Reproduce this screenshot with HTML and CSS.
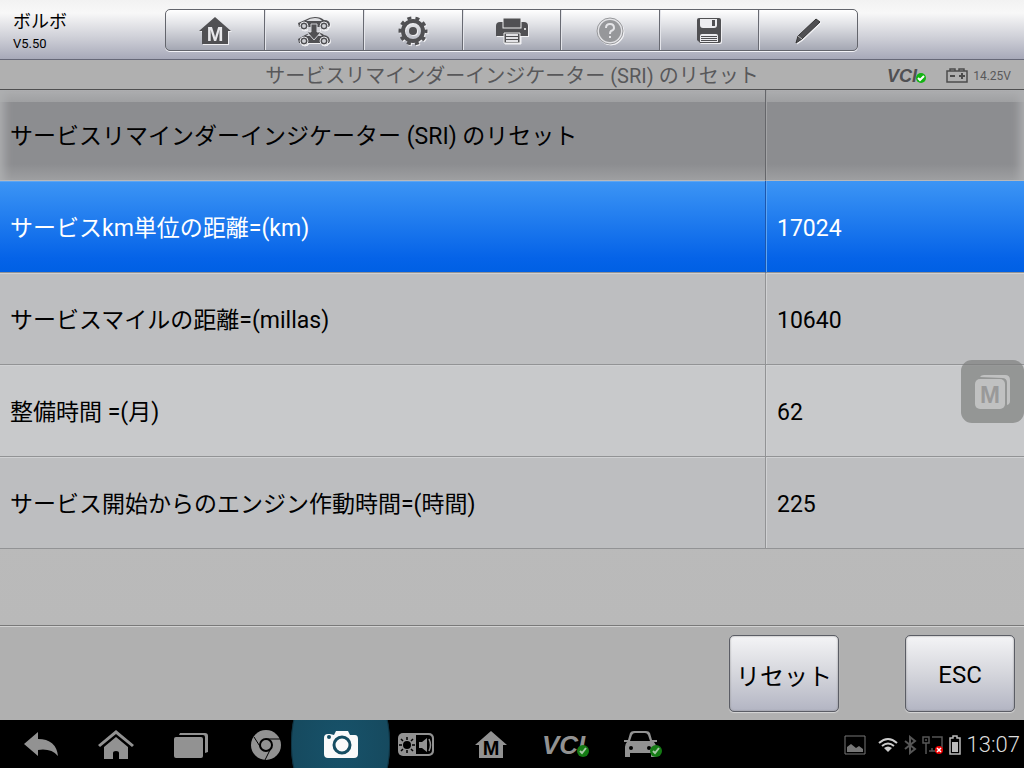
FILE: index.html
```html
<!DOCTYPE html>
<html lang="ja">
<head>
	<meta charset="utf-8">
	<title>ボルボ</title>
	<link rel="stylesheet" href="styles.css">
</head>
<body>
	<header class="topbar">
		<div class="vehicle">
			<div class="make">ボルボ</div>
			<div class="version">V5.50</div>
		</div>
		<div class="toolbar">
			<button type="button" aria-label="Home">
				<svg class="icon" width="34" height="30" viewBox="0 0 34 30"><path fill="#505053" d="M17 1 L33 15 H30 V28 H4 V15 H1 Z"/><text class="m-light" x="17" y="25" text-anchor="middle">M</text></svg>
			</button>
			<button type="button" aria-label="Vehicle swap">
				<svg class="icon" width="34" height="30" viewBox="0 0 34 30" fill="#505053">
					<path d="M1 7 L8 4 Q13 1 18 1 Q24 1 27 4 Q33 4 33 9 L32 11 H2 Z"/>
					<path fill="#dddee1" d="M9 5 Q13 2 18 2 Q23 2 25 5 Z"/>
					<path d="M1 23 L8 19 Q13 16 18 16 Q24 16 27 19 Q33 20 33 25 L32 27 H2 Z"/>
					<path fill="#d4d5d9" d="M9 20 Q12 17 14 17 V20 Z M21 17 Q24 18 25 20 H21 Z"/>
					<g stroke="#e4e4e7" stroke-width="1"><circle cx="7" cy="10" r="4"/><circle cx="27" cy="10" r="4"/><circle cx="7" cy="25" r="4"/><circle cx="27" cy="25" r="4"/></g>
					<g fill="#d0d1d6"><circle cx="7" cy="10" r="2"/><circle cx="27" cy="10" r="2"/><circle cx="7" cy="25" r="2"/><circle cx="27" cy="25" r="2"/><path d="M11 11 H23 V15 H11 Z"/></g>
					<path stroke="#d0d1d6" d="M14 8 H20 V16 H24 L17 24 L10 16 H14 Z"/>
				</svg>
			</button>
			<button type="button" aria-label="Settings">
				<svg class="icon" width="30" height="30" viewBox="0 0 30 30"><g fill="none" stroke="#505053"><circle cx="15" cy="15" r="13" stroke-width="3" stroke-dasharray="4 4.168" stroke-dashoffset="2"/><circle cx="15" cy="15" r="10" stroke-width="4"/></g><circle cx="15" cy="15" r="4" fill="#505053"/></svg>
			</button>
			<button type="button" aria-label="Print">
				<svg class="icon" width="34" height="28" viewBox="0 0 34 28"><path fill="#505053" d="M1 19 V9 Q1 5 5 5 H29 Q33 5 33 9 V19 Z"/><rect x="8" y="1" width="18" height="10" fill="#505053" stroke="#eeeeef"/><circle cx="30" cy="12" r="1" fill="#fff"/><path fill="#505053" stroke="#eeeeef" d="M9 16 H25 V26 H9 Z"/><path stroke="#e2e2e5" stroke-width="2" d="M11 18 H23 M11 21 H23 M11 24 H23"/></svg>
			</button>
			<button type="button" aria-label="Help" disabled>
				<svg class="icon" width="30" height="30" viewBox="0 0 30 30"><circle cx="15" cy="15" r="13" fill="#e3e3e6" stroke="#96979a"/><circle cx="15" cy="15" r="11" fill="#96979a"/><path d="M11 12 Q11 8 15 8 Q19 8 19 12 Q19 14 16 15 Q15 16 15 18 M15 20 V22" fill="none" stroke="#e5e5e8" stroke-width="2"/></svg>
			</button>
			<button type="button" aria-label="Save">
				<svg class="icon" width="26" height="28" viewBox="0 0 26 28"><path fill="#505053" d="M3 1 H23 Q25 1 25 3 V24 Q25 26 23 26 H4 L1 23 V3 Q1 1 3 1 Z"/><path fill="#ececef" d="M4 2 H21 V8 Q21 11 18 11 H7 Q4 11 4 8 Z M6 17 H20 Q22 17 22 19 V25 H4 V19 Q4 17 6 17 Z"/><path fill="#505053" d="M16 3 H19 V9 H16 Z"/><path stroke="#505053" stroke-width="1" d="M5 19.500 H21 M5 21.500 H21 M5 23.500 H21"/></svg>
			</button>
			<button type="button" aria-label="Edit">
				<svg class="icon" width="28" height="28" viewBox="0 0 28 28"><path fill="#505053" stroke="#333" d="M2 26 L4 19 L22 2 L26 5 L8 22 Z"/><path stroke="#bbb" fill="none" d="M4 19 L8 22"/></svg>
			</button>
		</div>
	</header>

	<div class="titlebar">
		<h1>サービスリマインダーインジケーター (SRI) のリセット</h1>
		<div class="power">
			<svg width="40" height="24" viewBox="0 0 40 24"><text class="vci" x="0" y="18" font-size="18" fill="#505053">VCI</text><circle cx="34" cy="14" r="5" fill="#12b312"/><path d="M31 14 L33 16 L37 12" fill="none" stroke="#fff" stroke-width="2"/></svg>
			<svg class="battery" width="22" height="16" viewBox="0 0 22 16" fill="none" stroke="#4c4c4c"><path stroke-width="1.500" d="M1 3 H21 V14 H1 Z M4 3 V1 H9 V3 M13 3 V1 H18 V3"/><path stroke-width="2" d="M4 8 H9 M13 8 H19 M16 5 V11"/></svg>
			<span>14.25V</span>
		</div>
	</div>

	<main>
		<table class="list">
			<thead>
				<tr><th scope="col">サービスリマインダーインジケーター (SRI) のリセット</th><th class="value" scope="col"></th></tr>
			</thead>
			<tbody>
				<tr class="selected"><td>サービスkm単位の距離=(km)</td><td class="value">17024</td></tr>
				<tr><td>サービスマイルの距離=(millas)</td><td class="value">10640</td></tr>
				<tr class="light"><td>整備時間 =(月)</td><td class="value">62</td></tr>
				<tr><td>サービス開始からのエンジン作動時間=(時間)</td><td class="value">225</td></tr>
			</tbody>
		</table>
	</main>

	<div class="actions">
		<button type="button">リセット</button>
		<button type="button">ESC</button>
	</div>

	<nav class="navbar">
		<button type="button" aria-label="Back"><svg width="36" height="28" viewBox="0 0 36 28" fill="#929292"><path d="M1 13 L15 1 V8 Q33 8 35 25 Q28 17 15 19 V25 Z"/></svg></button>
		<button type="button" aria-label="Home"><svg width="38" height="32" viewBox="0 0 38 32" fill="#929292"><path d="M1 16 L19 1 L37 16 L35 18 L19 5 L3 18 Z"/><path d="M7 18 L19 8 L31 18 V30 H22 V24 Q22 22 19 22 Q16 22 16 24 V30 H7 Z"/></svg></button>
		<button type="button" aria-label="Recent"><svg width="36" height="28" viewBox="0 0 36 28" fill="#929292"><rect x="1" y="6" width="29" height="21" rx="2"/><path d="M7 2 H32 Q35 2 35 5 V21 L32 22 V6 Q32 4 30 4 H6 Z"/></svg></button>
		<button type="button" aria-label="Browser"><svg width="32" height="32" viewBox="0 0 32 32"><circle cx="16" cy="16" r="15" fill="#929292"/><circle cx="16" cy="16" r="6" fill="#929292" stroke="#000" stroke-width="2"/><path d="M16 10 H30 M11 19 L4 8 M21 19 L15 31" stroke="#000" stroke-width="1"/></svg></button>
		<button type="button" class="camera" aria-label="Camera"><svg width="36" height="30" viewBox="0 0 36 30"><path fill="#fafafa" d="M11 5 L13 1 H25 L27 5 H32 Q35 5 35 9 V24 Q35 28 31 28 H5 Q1 28 1 24 V8 Q1 4 5 4 H7 Z"/><circle cx="19" cy="15" r="8" fill="none" stroke="#164d62" stroke-width="3"/><circle cx="6" cy="7" r="2" fill="#164d62"/></svg></button>
		<button type="button" aria-label="Brightness and sound"><svg width="38" height="26" viewBox="0 0 38 26"><rect x="1" y="1" width="36" height="23" rx="5" fill="#929292"/><path d="M19 3 H31 Q35 3 35 7 V18 Q35 22 31 22 H19 Z"/><circle cx="10" cy="13" r="4"/><path d="M10 5 V8 M10 18 V21 M2 13 H5 M15 13 H18 M4 7 L6 9 M14 17 L16 19 M4 19 L6 17 M14 9 L16 7" stroke="#000" stroke-width="1.500"/><path fill="#929292" d="M22 10 H25 L30 6 V20 L25 16 H22 Z"/><path d="M32 7 Q35 13 32 19" fill="none" stroke="#929292" stroke-width="1.500"/></svg></button>
		<button type="button" aria-label="MaxiSys"><svg width="34" height="30" viewBox="0 0 34 30"><path fill="#929292" d="M17 1 L33 15 H29 V28 H5 V15 H1 Z"/><text class="m-dark" x="17" y="25" text-anchor="middle">M</text></svg></button>
		<button type="button" aria-label="VCI"><svg width="50" height="36" viewBox="0 0 50 36"><text class="vci" x="1" y="27" font-size="26" fill="#929292">VCI</text><circle cx="42" cy="24" r="6" fill="#147b14"/><path d="M39 24 L41 26 L45 21" fill="none" stroke="#a8c9a8" stroke-width="2"/></svg></button>
		<button type="button" aria-label="Vehicle"><svg width="42" height="30" viewBox="0 0 42 30"><path fill="#929292" fill-rule="evenodd" d="M4 10 H8 L10 3 Q11 1 14 1 H26 Q29 1 30 3 L32 10 H37 V12 H34 Q36 14 36 18 V27 H31 V23 H10 V27 H5 V17 Q5 14 7 12 H4 Z M10 11 H30 L28 5 Q27 3 25 3 H15 Q13 3 12 5 Z"/><circle cx="11" cy="18" r="2"/><circle cx="29" cy="18" r="2"/><circle cx="36" cy="21" r="6" fill="#147b14"/><path d="M33 21 L35 23 L39 18" fill="none" stroke="#a8c9a8" stroke-width="2"/></svg></button>
		<div class="status">
			<svg class="picture" width="22" height="20" viewBox="0 0 22 20"><path d="M1 1 H21 V19 H1 Z" fill="none" stroke="#777"/><path fill="#777" d="M3 17 V12 L7 9 L12 13 L15 11 L19 14 V17 Z"/></svg>
			<svg width="20" height="16" viewBox="0 0 20 16" fill="none" stroke="#ccc" stroke-width="2"><path d="M1 6 Q10 -2 19 6 M4 9 Q10 4 16 9"/><path fill="#ccc" stroke="none" d="M6 11 Q10 8 14 11 L10 15 Z"/></svg>
			<svg width="14" height="20" viewBox="0 0 14 20"><path d="M2 6 L12 14 L7 18 V2 L12 6 L2 14" fill="none" stroke="#555" stroke-width="2"/></svg>
			<svg width="22" height="20" viewBox="0 0 22 20"><path d="M1 2 H7 V8 H1 Z M4 4 V6 M4 8 V19 M10 2 H20 V13 M7 16 H14 M10 16 V13" fill="none" stroke="#555" stroke-width="1.500"/><circle cx="17" cy="15" r="4" fill="#e00"/><path d="M15 13 L19 17 M19 13 L15 17" stroke="#fff" stroke-width="1.500"/></svg>
			<svg width="12" height="20" viewBox="0 0 12 20"><path d="M1 3 H4 V1 H8 V3 H11 V19 H1 Z" fill="none" stroke="#bbb" stroke-width="1.500"/><path fill="#bbb" d="M3 7 H9 V17 H3 Z"/></svg>
			<time>13:07</time>
		</div>
	</nav>

	<button type="button" class="float-menu" aria-label="Menu">
		<svg width="38" height="36" viewBox="0 0 38 36"><path fill="#c0c1c1" d="M6 3 Q7 1 10 1 H31 Q36 1 36 6 V27 Q36 30 33 31 V9 Q33 4 28 4 Z"/><rect x="1" y="5" width="30" height="30" rx="5" fill="#c0c1c1"/><text class="m-float" x="16" y="29" text-anchor="middle">M</text></svg>
	</button>
</body>
</html>
```

FILE: styles.css
```css
* {
	box-sizing: border-box;
}
body {
	margin: 0;
	min-height: 100vh;
	display: flex;
	flex-direction: column;
	font-family: Roboto, "Noto Sans CJK JP", sans-serif;
	color: #000;
	background: #bababa;
}
button {
	font-family: inherit;
	color: inherit;
	padding: 0;
	border: 0;
	background: none;
}
svg {
	display: block;
	flex: none;
}

/* top bar */
.topbar {
	display: grid;
	grid-template-columns: 165px minmax(0, 693px) 1fr;
	height: 60px;
	padding-top: 9px;
	border-bottom: 1px solid #666878;
	background: linear-gradient(#f2f2f2, #f8f8f8 22%, #cdced6 65%, #a7a9b9);
}
.vehicle {
	padding-left: 13px;
}
.make {
	font-size: 18px;
	line-height: 26px;
}
.version {
	font-size: 13px;
	line-height: 17px;
}
.toolbar {
	display: flex;
	height: 42px;
	border: 1px solid #63656c;
	border-radius: 5px;
	background: linear-gradient(#fff, #e2e3e7 35%, #a4a7b3);
	box-shadow: 0 1px 0 #f4f4f8;
}
.toolbar button {
	flex: 1;
	display: flex;
	align-items: center;
	justify-content: center;
	padding-top: 2px;
}
.toolbar button + button {
	border-left: 1px solid #686a72;
	box-shadow: inset 1px 0 0 #e4e5ea;
}
.icon {
	filter: drop-shadow(1px 1px 0 #f0f0f3);
}
.m-light,
.m-dark,
.m-float {
	font-family: "Liberation Sans", sans-serif;
	font-weight: bold;
	font-size: 20px;
}
.m-light {
	fill: #e8e8eb;
}
.m-dark {
	fill: #000;
}
.m-float {
	font-size: 24px;
	fill: #999;
}
.vci {
	font-family: "Liberation Sans", sans-serif;
	font-weight: bold;
	font-style: italic;
}

/* title */
.titlebar {
	display: grid;
	grid-template-columns: 1fr auto 1fr;
	align-items: center;
	height: 30px;
	padding-top: 3px;
	border-bottom: 1px solid #4f4f50;
	background: #b0b0b0;
}
.titlebar h1 {
	grid-column: 2;
	margin: 0;
	font-size: 20px;
	font-weight: normal;
	line-height: 26px;
	color: #58585a;
}
.power {
	display: flex;
	align-items: center;
	justify-content: flex-end;
	padding-right: 13px;
	font-size: 12px;
	color: #58585a;
}
.battery {
	margin: 0 5px 0 19px;
}

/* data list */
main {
	flex: 1;
	background: linear-gradient(#bfbfbf, #b9b9b9);
}
.list {
	width: 100%;
	table-layout: fixed;
	border-spacing: 0;
	font-size: 23px;
	line-height: 30px;
}
.list th,
.list td {
	height: 92px;
	padding: 4px 10px 0;
	text-align: left;
	font-weight: normal;
	border-bottom: 1px solid #929395;
	box-shadow: inset 0 1px 0 #d0d1d3;
	background: #bdbec0;
}
.list .value {
	width: 259px;
	padding-left: 11px;
	border-left: 1px solid #929395;
	box-shadow: inset 1px 1px 0 #d0d1d3;
}
.list thead tr {
	background: linear-gradient(#adaeb0, #9fa0a2 12px, #8c8d90 12px, #8c8d90 74px, #9fa0a2);
	box-shadow: inset 12px 0 10px -8px #aeafb1, inset -12px 0 10px -8px #aeafb1;
}
.list th,
.list th.value {
	height: 91px;
	background: none;
	box-shadow: none;
	border-bottom-color: #b7b8ba;
}
.list th.value {
	border-left-color: #65666a;
	box-shadow: inset 1px 0 0 #a3a4a6;
}
.list .light td {
	background: #c8c9cb;
}
.list .selected td {
	color: #fff;
	background: linear-gradient(#3c95f5, #0563e8 85%, #0060e4);
	box-shadow: inset 0 1px 0 #5ca5f3;
}
.list .selected .value {
	border-left-color: #1d56ad;
	box-shadow: inset 1px 0 0 #5ca5f3;
}

/* bottom buttons */
.actions {
	display: flex;
	justify-content: flex-end;
	gap: 66px;
	height: 95px;
	padding: 9px 9px 0 0;
	border-top: 1px solid #797979;
	background: #b0b0b0;
	box-shadow: inset 0 1px 0 #d2d2d2;
}
.actions button {
	width: 110px;
	height: 77px;
	padding-top: 2px;
	font-size: 24px;
	border: 1px solid #5b5d65;
	border-radius: 5px;
	background: linear-gradient(#f4f4f6, #d5d6dc 50%, #b3b5c3);
	box-shadow: 0 1px 1px #d8d8d8, inset 0 0 2px #888;
}

/* system bar */
.navbar {
	display: flex;
	height: 48px;
	padding-left: 3px;
	overflow: hidden;
	background: #000;
}
.navbar button {
	display: flex;
	flex: 0 1 75px;
	align-items: center;
	justify-content: center;
	padding-top: 2px;
}
.navbar .camera {
	flex-shrink: 0;
	flex-basis: 99px;
	margin: 0 -12px;
	background: radial-gradient(50px 80px, #17526a, #164a5f 96%, #0b2a37 99%, transparent);
}
.status {
	display: flex;
	align-items: center;
	gap: 5px;
	margin-left: auto;
	padding: 2px 4px 0 0;
	color: #ddd;
}
.picture {
	margin-right: 7px;
}
.status time {
	margin-left: 1px;
	font-size: 22px;
	line-height: 24px;
	font-weight: 300;
}

/* floating shortcut, lies over the list */
.float-menu {
	position: absolute;
	top: 360px;
	right: 0;
	display: flex;
	align-items: center;
	justify-content: center;
	width: 63px;
	height: 63px;
	border-radius: 11px;
	background: rgba(124, 125, 124, 0.68);
}
```
